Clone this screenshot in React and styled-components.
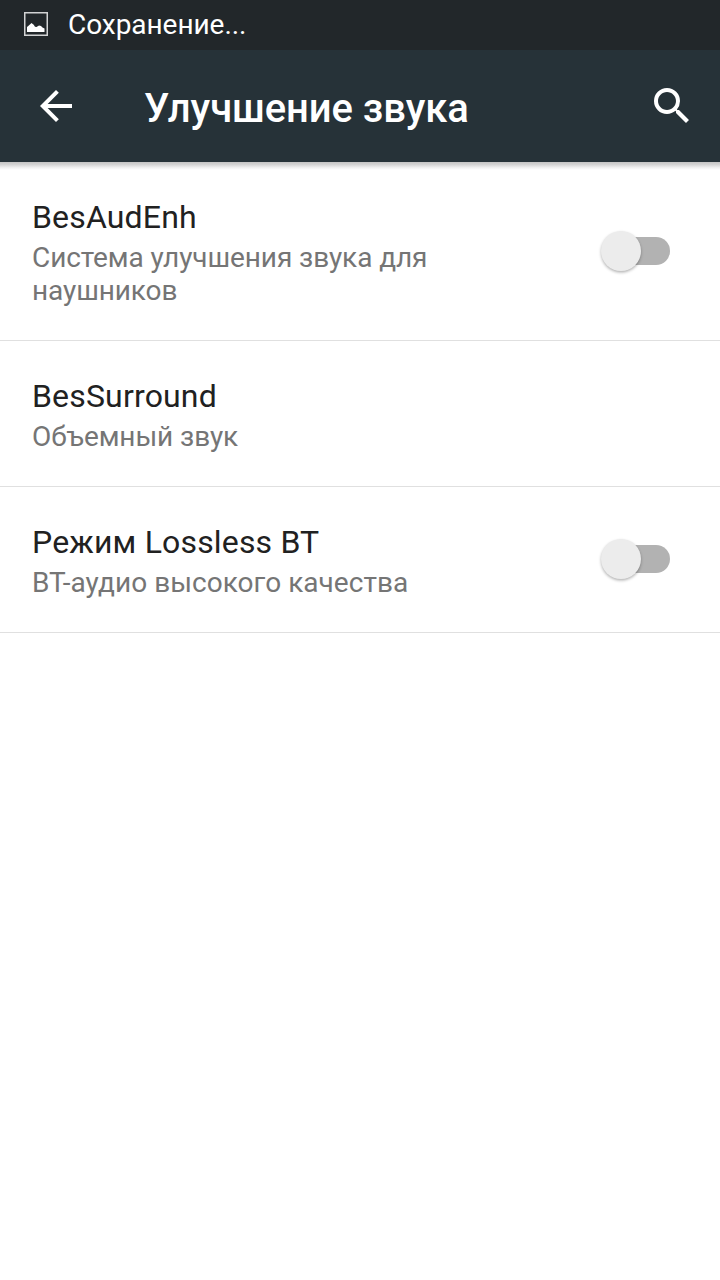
import React from "react";
import styled, { createGlobalStyle } from "styled-components";

const GlobalStyle = createGlobalStyle`
  * { box-sizing: border-box; }
  body { margin: 0; background: #fff; font-family: Roboto, sans-serif; }
`;

const Screen = styled.main`
  display: flex;
  flex-direction: column;
  width: 720px;
  height: 1280px;
  background: #fff;
  overflow: hidden;
`;

const StatusBar = styled.div`
  display: flex;
  align-items: center;
  gap: 20px;
  height: 50px;
  flex: none;
  padding: 0 0 2px 24px;
  background: #22272a;
  color: #fff;
`;

const StatusText = styled.span`
  padding-top: 2px;
  font-size: 28px;
  line-height: 34px;
  letter-spacing: -0.05px;
  white-space: nowrap;
`;

const AppBar = styled.header`
  display: flex;
  align-items: center;
  height: 112px;
  flex: none;
  padding: 0 24px 0 32px;
  background: #263238;
  color: #fff;
`;

const BarShadow = styled.div`
  height: 8px;
  margin-bottom: -8px;
  flex: none;
  background: linear-gradient(#c4c4c4, #d2d2d2 30%, #f0f0f0 70%, #fff);
`;

const IconButton = styled.button`
  display: flex;
  width: 48px;
  height: 48px;
  padding: 0;
  border: 0;
  background: none;
  color: inherit;
`;

const Title = styled.h1`
  flex: 1;
  margin: 5px 0 0 64px;
  font-size: 40px;
  line-height: 48px;
  font-weight: 500;
  letter-spacing: -0.07px;
  white-space: nowrap;
`;

const Row = styled.section`
  display: flex;
  align-items: flex-start;
  justify-content: space-between;
  height: ${(p) => p.$height}px;
  flex: none;
  padding: 36px 50px 0 32px;
  border-bottom: 1px solid #e0e0e0;
`;

const RowText = styled.div`
  width: 500px;
`;

const RowTitle = styled.div`
  font-size: 32px;
  line-height: 38px;
  letter-spacing: 0.17px;
  color: #212121;
`;

const Summary = styled.div`
  margin-top: 5px;
  width: 430px;
  font-size: 28px;
  line-height: 33px;
  letter-spacing: ${(p) => p.$tracking}px;
  color: #757575;
`;

const Switch = styled.div`
  display: flex;
  align-items: center;
  height: 40px;
  margin-top: ${(p) => p.$offset}px;
`;

const Thumb = styled.div`
  width: 40px;
  height: 40px;
  border-radius: 50%;
  background: #ececec;
  box-shadow: 0 1.5px 3px rgba(0, 0, 0, 0.3);
  z-index: 1;
`;

const Track = styled.div`
  width: 49px;
  height: 28px;
  margin-left: -20px;
  border-radius: 14px;
  background: #b2b2b2;
`;

const items = [
  { title: "BesAudEnh", summary: "Система улучшения звука для наушников", height: 179, tracking: -0.09, toggle: true, offset: 33 },
  { title: "BesSurround", summary: "Объемный звук", height: 146, tracking: -0.08 },
  { title: "Режим Lossless BT", summary: "BT-аудио высокого качества", height: 146, tracking: 0.04, toggle: true, offset: 16 },
];

export default function App() {
  return (
    <Screen>
      <GlobalStyle />
      <StatusBar>
        <svg width="24" height="24" viewBox="0 0 24 24" fill="none">
          <rect x="0.75" y="0.75" width="22.5" height="22.5" stroke="#fff" strokeOpacity="0.8" strokeWidth="1.5" />
          <path d="M3 20v-5l1.8-1.6L7.5 11l2.2 1.8 1.3 2 1.5.2 2.5-1.4 2 .5 1.5 1.4 2 1V20z" fill="#fff" />
        </svg>
        <StatusText>Сохранение...</StatusText>
      </StatusBar>
      <AppBar>
        <IconButton aria-label="Назад">
          <svg width="48" height="48" viewBox="0 0 24 24" fill="currentColor">
            <path d="M20 11H7.83l5.59-5.59L12 4l-8 8 8 8 1.41-1.41L7.83 13H20v-2z" />
          </svg>
        </IconButton>
        <Title>Улучшение звука</Title>
        <IconButton aria-label="Поиск">
          <svg width="48" height="48" viewBox="0 0 24 24" fill="currentColor">
            <path d="M15.5 14h-.79l-.28-.27A6.47 6.47 0 0 0 16 9.5 6.5 6.5 0 1 0 9.5 16c1.61 0 3.09-.59 4.23-1.57l.27.28v.79l5 4.99L20.49 19l-4.99-5zm-6 0C7.01 14 5 11.99 5 9.5S7.01 5 9.5 5 14 7.01 14 9.5 11.99 14 9.5 14z" />
          </svg>
        </IconButton>
      </AppBar>
      <BarShadow />
      {items.map((item) => (
        <Row key={item.title} $height={item.height}>
          <RowText>
            <RowTitle>{item.title}</RowTitle>
            <Summary $tracking={item.tracking}>{item.summary}</Summary>
          </RowText>
          {item.toggle && (
            <Switch role="switch" aria-checked="false" aria-label={item.title} $offset={item.offset}>
              <Thumb />
              <Track />
            </Switch>
          )}
        </Row>
      ))}
    </Screen>
  );
}
